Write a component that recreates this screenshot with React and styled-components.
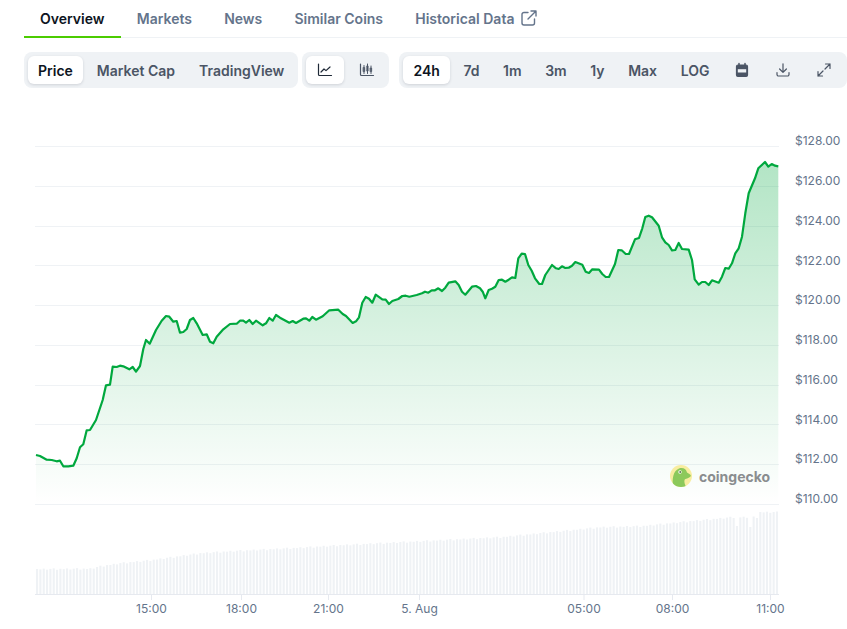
import React from 'react';
import styled, { createGlobalStyle } from 'styled-components';

const GlobalStyle = createGlobalStyle`
  html, body {
    margin: 0;
    padding: 0;
    background: #fff;
    font-family: 'Inter', 'Liberation Sans', sans-serif;
  }
`;

const Page = styled.div`
  width: 847px;
  height: 629px;
  overflow: hidden;
  padding-left: 24px;
  box-sizing: border-box;
`;

const TabBar = styled.nav`
  display: flex;
  height: 38px;
  box-sizing: border-box;
  border-bottom: 1px solid #eff2f5;
`;

const Tab = styled.a`
  display: flex;
  align-items: center;
  gap: 7px;
  height: 38px;
  padding: 0 16.1px;
  box-sizing: border-box;
  font-size: 14px;
  font-weight: 600;
  white-space: nowrap;
  color: ${p => (p.$active ? '#0d1421' : '#64748b')};
  border-bottom: 2px solid ${p => (p.$active ? '#4bcc00' : 'transparent')};
`;

const Toolbar = styled.div`
  display: flex;
  margin-top: 14px;
  gap: 4px;
`;

const Group = styled.div`
  display: flex;
  flex: none;
  gap: ${p => p.$gap || 4}px;
  padding: 4px;
  height: 36px;
  box-sizing: border-box;
  background: #eff2f5;
  border-radius: 8px;
  margin-left: ${p => p.$push || 0}px;
`;

const Btn = styled.button`
  display: flex;
  flex: none;
  align-items: center;
  justify-content: center;
  border: 0;
  height: 28px;
  padding: 0 10px;
  width: ${p => (p.$icon ? '37.5px' : 'auto')};
  box-sizing: border-box;
  font-family: inherit;
  font-size: 14px;
  font-weight: 600;
  white-space: nowrap;
  color: ${p => (p.$active ? '#0d1421' : '#4b5565')};
  background: ${p => (p.$active ? '#fff' : 'transparent')};
  border-radius: 6px;
  box-shadow: ${p => (p.$active ? '0 1px 3px rgba(16, 24, 40, 0.14)' : 'none')};
`;

const ChartWrap = styled.div`
  position: relative;
  margin-left: -24px;
  margin-top: 12px;
`;

const ChartSvg = styled.svg`
  display: block;
  width: 847px;
  height: 529px;
`;

const AxisText = styled.text`
  font-family: 'Inter', 'Liberation Sans', sans-serif;
  font-size: 12px;
  fill: #64748b;
`;

const Watermark = styled.div`
  position: absolute;
  left: 670px;
  top: 365px;
  display: flex;
  align-items: center;
  gap: 7px;
`;

const WatermarkText = styled.span`
  font-family: 'Inter', 'Liberation Sans', sans-serif;
  font-size: 14px;
  font-weight: 700;
  color: #8a8d8f;
`;

const IconSvg = ({ children }) => (
  <svg width="16" height="16" viewBox="0 0 16 16" fill="none" stroke="#4b5565" strokeWidth="1.2" strokeLinecap="round" strokeLinejoin="round">
    {children}
  </svg>
);

const LineIcon = () => (
  <IconSvg>
    <path d="M1.500 2v10.500a1 1 0 0 0 1 1h12" stroke="#1f2937" />
    <path d="M4 10l3-3 2 1.600L13 5" stroke="#1f2937" />
  </IconSvg>
);

const CandleIcon = () => (
  <IconSvg>
    <path d="M1.500 2v10.500a1 1 0 0 0 1 1h12" />
    <path d="M5 3.500v8M8.500 2v9.500M12 4v7.500" strokeWidth="1" />
    <path d="M4.300 5.500h1.400v4H4.300zM7.800 4h1.400v5H7.800zM11.300 6h1.400v3.500h-1.400z" fill="#4b5565" strokeWidth="0.6" />
  </IconSvg>
);

const CalendarIcon = () => (
  <IconSvg>
    <path d="M5 1.500v2M11 1.500v2" strokeWidth="1.500" />
    <path d="M2.500 4.500a1.500 1.500 0 0 1 1.500-1.500h8a1.500 1.500 0 0 1 1.500 1.500V13a1.500 1.500 0 0 1-1.500 1.500H4A1.500 1.500 0 0 1 2.500 13z" fill="#4b5565" />
    <path d="M3.800 7.200h8.400v3.300H3.800z" fill="#eff2f5" stroke="none" />
  </IconSvg>
);

const DownloadIcon = () => (
  <IconSvg>
    <path d="M8 1.800v8.400M4.600 7l3.400 3.400L11.400 7" />
    <path d="M2 10.500v2a1.500 1.500 0 0 0 1.500 1.500h9a1.500 1.500 0 0 0 1.500-1.500v-2" />
  </IconSvg>
);

const ExpandIcon = () => (
  <IconSvg>
    <path d="M9.500 2h4.500v4.500M14 2L9 7" />
    <path d="M6.500 14H2V9.500M2 14l5-5" />
  </IconSvg>
);

const ExternalIcon = () => (
  <svg width="16" height="16" viewBox="0 0 16 16" fill="none" stroke="#64748b" strokeWidth="1.400" strokeLinecap="round" strokeLinejoin="round">
    <path d="M7 2.500H3a2 2 0 0 0-2 2V13a2 2 0 0 0 2 2h8.500a2 2 0 0 0 2-2V9" />
    <path d="M10 1h5v5M15 1L7 9" />
  </svg>
);

const GeckoLogo = () => (
  <svg width="22" height="22" viewBox="0 0 22 22">
    <defs>
      <clipPath id="geckoClip"><circle cx="11" cy="11" r="11" /></clipPath>
    </defs>
    <circle cx="11" cy="11" r="11" fill="#f8eda0" />
    <path clipPath="url(#geckoClip)" d="M3 22C2 14 3 6 9 3.500 13 2 16.500 4 17 7.500c1.500 1 3.500 1.500 4 3.500-2 2.500-6 2.500-6.500 4-.5 2 .5 5 1.500 7z" fill="#8cc95b" />
    <circle cx="10" cy="7" r="1.700" fill="#fff" />
    <circle cx="10.200" cy="7" r="0.900" fill="#5b6b4a" />
  </svg>
);

const LINE = [
  [36, 455], [40, 456], [46.7, 459.7], [51.7, 460], [56.7, 461.3], [60, 460.7], [63.3, 466.3], [68.3, 466.3], [73.3, 465.7],
  [76.7, 458.3], [80, 447.3], [83.3, 444.3], [86.7, 430.3], [90, 430], [96, 420], [102.7, 400], [106, 385.3], [110, 384.7],
  [112.7, 366.7], [116.7, 367], [120, 365.7], [123.3, 366.3], [129.3, 369.3], [132.7, 367], [136, 371.7], [140, 366],
  [143.3, 349], [146, 340], [149.7, 343.7], [156, 330], [161.7, 320.7], [166, 316], [169.3, 316.7], [173.3, 321.7],
  [176.7, 321], [180, 332.7], [183.3, 332], [186.7, 329], [190, 320], [193.3, 318], [196.7, 323.3], [202.7, 335],
  [206.7, 334.3], [210, 341.7], [213.3, 343.3], [216.7, 336.7], [223.3, 329.3], [230, 324], [236.7, 323.7], [240, 320.7],
  [243.3, 320.7], [246, 322.7], [249.3, 320], [252.7, 324], [256, 320.7], [262.7, 325.3], [266, 323.3], [269.3, 318],
  [272.7, 320.7], [276, 315], [280, 317.7], [289.3, 322.7], [292.7, 321], [296, 323], [303.3, 318.7], [306, 318.3],
  [309.3, 320.7], [312.3, 317], [316, 319.7], [322.7, 316.3], [329.3, 310.3], [338.3, 309.7], [342.7, 314], [346, 316],
  [352.7, 323], [356, 321.3], [359, 317.3], [362.3, 302.7], [365.7, 297], [369, 298.7], [372.3, 302.7], [375.7, 294.7],
  [382.3, 299.3], [385.7, 299.7], [389, 304], [392.3, 301], [398.3, 299], [402.3, 296], [405.7, 295.7], [409.3, 296.7],
  [416.7, 295], [422, 293.3], [425, 291.7], [428.3, 292.7], [431.7, 290.3], [435, 290.3], [438.3, 288.3], [442, 291],
  [445.3, 287.7], [448.7, 282.7], [455.3, 281.3], [458.7, 285], [462, 291.7], [465.3, 294.7], [472, 286.7], [476, 286],
  [480, 288.3], [482.7, 291.7], [485.3, 298.3], [488.7, 290], [492, 288.7], [495.3, 286.7], [498.7, 280], [502, 279.7],
  [505.3, 281.7], [508.7, 279.7], [512, 277.3], [515.3, 278], [518.3, 258.3], [521.7, 253.7], [525, 254], [528.3, 265],
  [531.7, 270.7], [535, 278.3], [539.3, 284], [542, 284], [545.3, 275], [552, 265], [556, 268.3], [558.7, 269], [562, 266.3],
  [565.3, 268], [568.7, 267.7], [572, 265.7], [575.3, 262], [582.3, 264.7], [585.7, 271.7], [589, 273], [592.3, 269.3],
  [599, 269.7], [602.3, 274], [605.7, 277], [609, 277], [615, 264], [618.3, 250], [621.7, 250.3], [625.7, 254], [629, 254],
  [635, 239.3], [639, 238], [642.3, 228.3], [645.3, 217], [648.7, 215.7], [652, 217.3], [658.7, 225.7], [662, 237.3],
  [665.3, 242.3], [668.7, 245], [672, 250.3], [675.3, 250], [678.7, 243], [682, 249], [688.7, 249.7], [692, 260],
  [694.7, 279.3], [698.7, 284.7], [702, 282], [705.3, 282], [708.7, 285], [712, 280.3], [718.7, 282.7], [722, 276.7],
  [725.3, 268], [728.7, 268.7], [732, 263.3], [735.3, 253.3], [738.7, 248.3], [742, 236.7], [745.3, 213.3], [748.7, 193.3],
  [755, 178.3], [758.3, 168.3], [765, 162], [768.3, 166.7], [771.7, 164], [775, 165.7], [778.3, 166.3],
];

// volume bar tops, read off the picture (x, y), interpolated per bar
const VOLUME = [
  [36, 569], [90, 568.5], [100, 566], [120, 563], [150, 560], [200, 553], [230, 551], [300, 547.5], [340, 545], [400, 542],
  [500, 537], [540, 533], [600, 527], [640, 526], [700, 520], [732, 517],
];

const topAt = x => {
  if (x >= 733.5) {
    if (x < 737) return 526;
    if (x < 746) return 517;
    if (x < 752) return 527;
    if (x < 756) return 517;
    return 512;
  }
  for (let i = 1; i < VOLUME.length; i++) {
    if (x <= VOLUME[i][0]) {
      const [x0, y0] = VOLUME[i - 1];
      const [x1, y1] = VOLUME[i];
      return y0 + ((y1 - y0) * (x - x0)) / (x1 - x0);
    }
  }
  return 517;
};

const BARS = Array.from({ length: 223 }, (_, i) => {
  const x = 36 + i * 3.333;
  return { x, top: topAt(x) + [0, 0.4, -0.3, 0.8, 0, -0.5, 1][i % 7] };
});

const PRICES = ['$128.00', '$126.00', '$124.00', '$122.00', '$120.00', '$118.00', '$116.00', '$114.00', '$112.00', '$110.00'];
const TIMES = [['15:00', 151.5], ['18:00', 241.5], ['21:00', 328.5], ['5. Aug', 419.5], ['05:00', 584], ['08:00', 672.5], ['11:00', 770.5]];

const OFFSET = 100; // chart svg starts 100px down the page
const linePath = LINE.map(([x, y], i) => `${i ? 'L' : 'M'}${x} ${y - OFFSET}`).join(' ');
const areaPath = `${linePath} L778.3 ${504 - OFFSET} L36 ${504 - OFFSET} Z`;

function PriceChart() {
  return (
    <ChartSvg viewBox="0 0 847 529">
      <defs>
        <linearGradient id="area" gradientUnits="userSpaceOnUse" x1="0" y1={162 - OFFSET} x2="0" y2={504 - OFFSET}>
          <stop offset="0" stopColor="#00a83e" stopOpacity="0.3" />
          <stop offset="1" stopColor="#00a83e" stopOpacity="0" />
        </linearGradient>
      </defs>
      {PRICES.map((label, i) => {
        const y = 146 + i * 39.75 - OFFSET;
        return (
          <g key={label}>
            <line x1="35" x2="779" y1={Math.round(y) + 0.5} y2={Math.round(y) + 0.5} stroke="#eff2f5" />
            <AxisText x="795" y={y - 0.7}>{label}</AxisText>
          </g>
        );
      })}
      <path d={areaPath} fill="url(#area)" />
      <path d={linePath} fill="none" stroke="#00a83e" strokeWidth="2.2" strokeLinejoin="round" />
      {BARS.map(b => (
        <rect key={b.x} x={b.x} y={b.top - OFFSET} width="2.1" height={594.5 - b.top} fill="#eff2f5" />
      ))}
      <line x1="35" x2="779" y1={594.5 - OFFSET} y2={594.5 - OFFSET} stroke="#e6e9ef" />
      {TIMES.map(([label, x]) => (
        <g key={label}>
          <line x1={x} x2={x} y1={595 - OFFSET} y2={600 - OFFSET} stroke="#e6e9ef" />
          <AxisText x={x} y={612.5 - OFFSET} textAnchor="middle">{label}</AxisText>
        </g>
      ))}
    </ChartSvg>
  );
}

export default function App() {
  return (
    <Page>
      <GlobalStyle />
      <TabBar>
        <Tab $active>Overview</Tab>
        <Tab>Markets</Tab>
        <Tab>News</Tab>
        <Tab>Similar Coins</Tab>
        <Tab>Historical Data <ExternalIcon /></Tab>
      </TabBar>
      <Toolbar>
        <Group>
          <Btn $active>Price</Btn>
          <Btn>Market Cap</Btn>
          <Btn>TradingView</Btn>
        </Group>
        <Group>
          <Btn $active $icon><LineIcon /></Btn>
          <Btn $icon><CandleIcon /></Btn>
        </Group>
        <Group $push={6} $gap={3.6}>
          <Btn $active>24h</Btn>
          <Btn>7d</Btn>
          <Btn>1m</Btn>
          <Btn>3m</Btn>
          <Btn>1y</Btn>
          <Btn>Max</Btn>
          <Btn>LOG</Btn>
          <Btn $icon><CalendarIcon /></Btn>
          <Btn $icon><DownloadIcon /></Btn>
          <Btn $icon><ExpandIcon /></Btn>
        </Group>
      </Toolbar>
      <ChartWrap>
        <PriceChart />
        <Watermark>
          <GeckoLogo />
          <WatermarkText>coingecko</WatermarkText>
        </Watermark>
      </ChartWrap>
    </Page>
  );
}
